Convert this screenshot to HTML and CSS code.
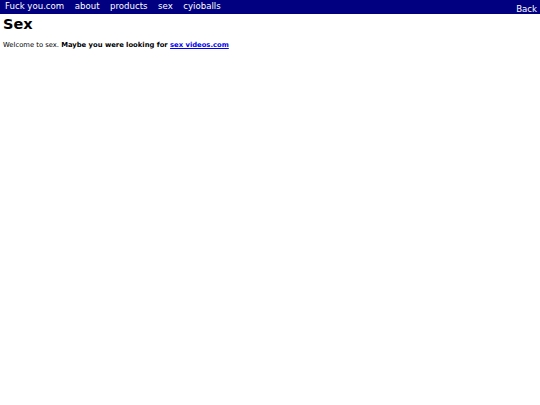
FILE: index.html
```html
<!DOCTYPE html>
<html>
<head>
<meta charset="utf-8">
<link rel="stylesheet" href="styles.css">
</head>
<body>
<nav class="topbar">
  <div class="nav-left">
    <a class="nav-link" href="#">Fuck you.com</a>
    <a class="nav-link" href="#">about</a>
    <a class="nav-link" href="#">products</a>
    <a class="nav-link" href="#">sex</a>
    <a class="nav-link" href="#">cyioballs</a>
  </div>
  <a class="nav-back" href="#">Back</a>
</nav>
<main class="content">
  <h1 class="title">Sex</h1>
  <p class="intro">Welcome to sex. <b>Maybe you were looking for <a class="ext" href="#">sex videos.com</a></b></p>
</main>
</body>
</html>
```

FILE: styles.css
```css
html, body {
  margin: 0;
  padding: 0;
  background: #fff;
  font-family: "DejaVu Sans", Verdana, sans-serif;
}
.topbar {
  display: flex;
  justify-content: space-between;
  background: #000080;
  height: 14px;
}
.nav-left {
  display: flex;
}
.nav-link, .nav-back {
  color: #fff;
  text-decoration: none;
  font-size: 8.6px;
  line-height: 12px;
  padding: 0 5.5px 0 5px;
}
.nav-back {
  padding-top: 3px;
  padding-right: 3px;
}
.content {
  padding: 0 3px;
}
.title {
  margin: 2px 0 0;
  font-size: 14.5px;
  line-height: 17px;
}
.intro {
  margin: 8px 0 0;
  font-size: 6.8px;
  line-height: 8px;
}
.ext {
  color: #0000ee;
}
```
